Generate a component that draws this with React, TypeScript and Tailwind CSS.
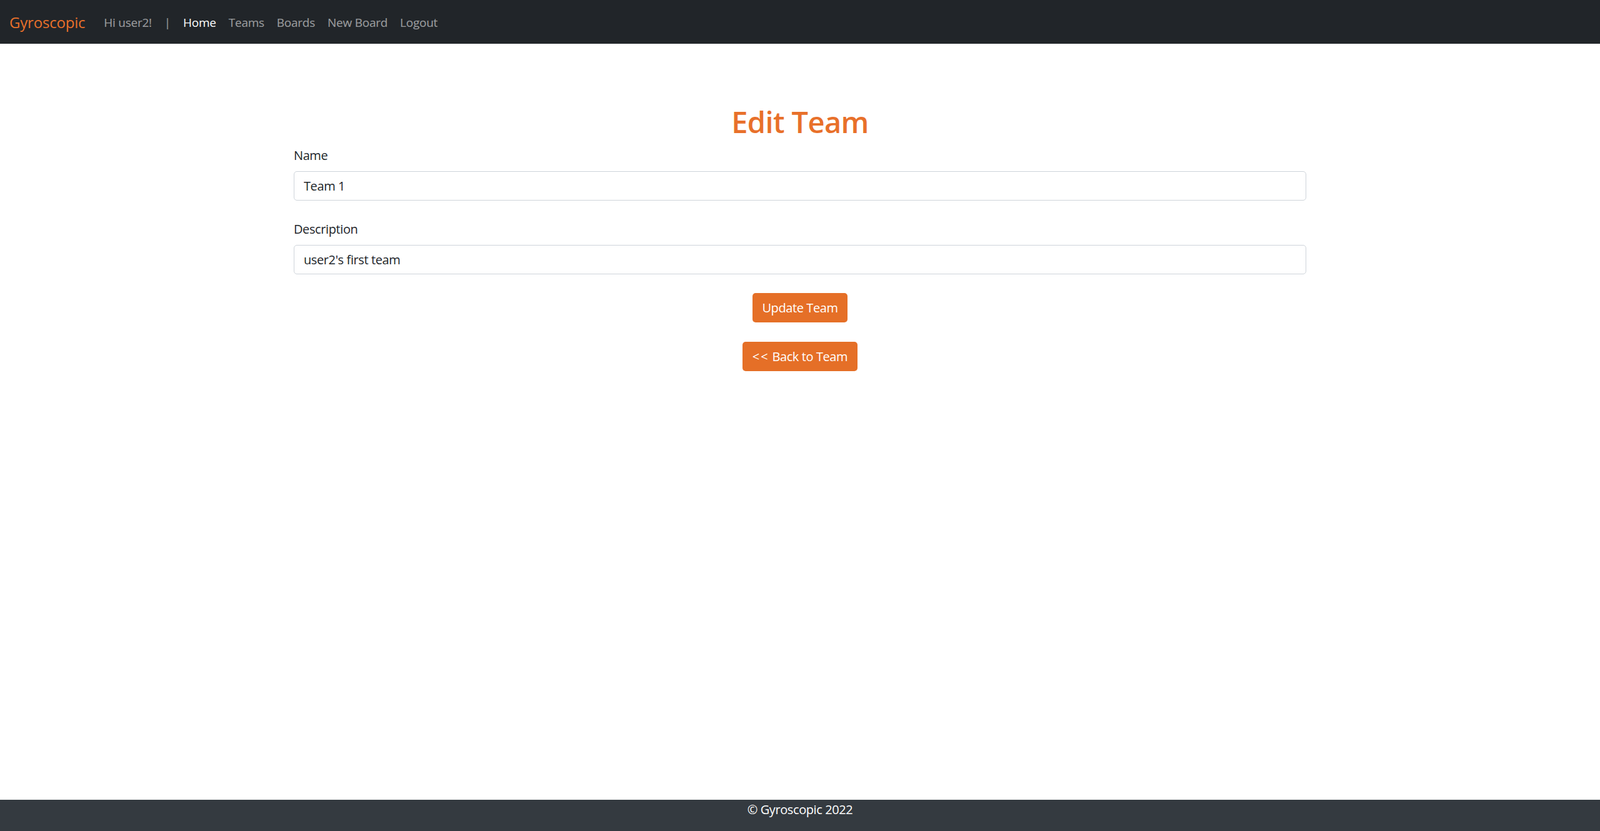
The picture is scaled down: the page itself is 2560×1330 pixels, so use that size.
export default function App() {
  return (
    <div className="min-h-[1330px] flex flex-col bg-white text-[#212529] font-['Open_Sans',sans-serif]">
      {/* navbar */}
      <nav className="h-[70px] shrink-0 bg-[#212529] flex items-center px-[15px] pt-[2px]">
        <a className="text-[24px] text-[#e8702a] mr-[20px] tracking-[-0.2px]">Gyroscopic</a>
        <div className="flex items-center text-[19px] tracking-[-0.25px]">
          <span className="px-[10px] text-white/55">Hi user2!</span>
          <span className="px-[10px] text-white/55">|</span>
          <a className="px-[10px] text-white">Home</a>
          <a className="px-[10px] text-white/55">Teams</a>
          <a className="px-[10px] text-white/55">Boards</a>
          <a className="px-[10px] text-white/55">New Board</a>
          <a className="px-[10px] text-white/55">Logout</a>
        </div>
      </nav>

      <main className="flex-1 w-[1650px] mx-auto px-[15px] pt-[95px]">
        <h1 className="text-[47px] leading-[60px] font-semibold text-[#e8702a] text-center mb-[9px] tracking-[-0.6px]">
          Edit Team
        </h1>
        <form className="text-[20px] tracking-[-0.4px]">
          <label className="block leading-[30px] mb-[10px]">Name</label>
          <input
            defaultValue="Team 1"
            className="block w-full h-[47px] px-[15px] border border-[#ced4da] rounded-[5px] leading-[30px] outline-none"
          />
          <label className="block leading-[30px] mt-[31px] mb-[10px]">Description</label>
          <input
            defaultValue="user2's first team"
            className="block w-full h-[47px] px-[15px] border border-[#ced4da] rounded-[5px] leading-[30px] outline-none"
          />
          <div className="flex flex-col items-center">
            <button
              type="button"
              className="mt-[30px] h-[47px] px-[15px] rounded-[5px] bg-[#e56f27] text-white leading-[30px]"
            >
              Update Team
            </button>
            <button
              type="button"
              className="mt-[31px] h-[47px] px-[16px] rounded-[5px] bg-[#e56f27] text-white leading-[30px]"
            >
              <span className="tracking-[2px]">&lt;&lt;</span> Back to Team
            </button>
          </div>
        </form>
      </main>

      <footer className="h-[50px] shrink-0 bg-[#343a40] text-white text-center text-[20px] leading-[30px] tracking-[-0.4px] pt-[1px]">
        © Gyroscopic 2022
      </footer>
    </div>
  )
}
